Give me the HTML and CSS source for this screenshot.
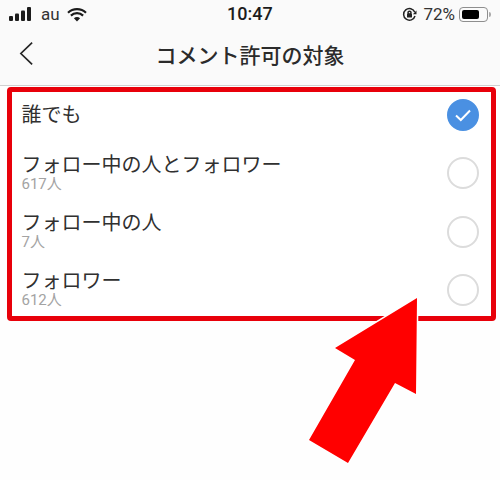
FILE: index.html
```html
<!DOCTYPE html>
<html lang="ja">
<head>
    <meta charset="UTF-8">
    <meta name="viewport" content="width=device-width, initial-scale=1.0">
    <title>コメント許可の対象</title>
    <link rel="stylesheet" href="styles.css">
</head>
<body>
    <div class="screen">
        <div class="status-bar">
            <div class="status-left">
                <svg class="signal" width="23" height="14" viewBox="0 0 23 14">
                    <rect x="0" y="9" width="4" height="5" rx="1"/>
                    <rect x="6" y="6.5" width="4" height="7.5" rx="1"/>
                    <rect x="12" y="3.5" width="4" height="10.5" rx="1"/>
                    <rect x="18" y="0" width="4" height="14" rx="1"/>
                </svg>
                <span class="carrier">au</span>
                <svg class="wifi" width="20" height="15" viewBox="0 0 20 15">
                    <path d="M10 2.2c3.4 0 6.6 1.3 9 3.6" />
                    <path d="M10 2.2c-3.4 0-6.6 1.3-9 3.6" />
                    <path d="M3.9 8.6c3.4-3.2 8.8-3.2 12.2 0" />
                    <path class="wifi-dot" d="M10 14.6 6.9 11.2c1.8-1.5 4.4-1.5 6.2 0z"/>
                </svg>
            </div>
            <div class="clock">10:47</div>
            <div class="status-right">
                <svg class="lock" width="15" height="15" viewBox="0 0 15 15">
                    <path d="M12.8 5.2A5.8 5.8 0 1 0 13 9"/>
                    <path class="lock-fill" d="M14.5 3.6v3.6h-3.6z"/>
                    <rect class="lock-fill" x="5" y="6.6" width="5" height="4" rx=".6"/>
                    <circle cx="7.5" cy="5.8" r="1.5"/>
                </svg>
                <span class="percent">72%</span>
                <div class="battery"><div class="battery-level" style="width: 72%"></div></div>
                <div class="battery-cap"></div>
            </div>
        </div>

        <div class="nav-bar">
            <svg class="back" width="15" height="25" viewBox="0 0 16 26">
                <path d="M14 1.5 2 13l12 11.5"/>
            </svg>
            <h1>コメント許可の対象</h1>
        </div>

        <div class="options">
            <div class="option">
                <div class="option-text"><div class="label">誰でも</div></div>
                <div class="radio checked">
                    <svg width="18" height="14" viewBox="0 0 18 14"><path d="M2 7.5 6.8 12 16 2.5"/></svg>
                </div>
            </div>
            <div class="option">
                <div class="option-text">
                    <div class="label">フォロー中の人とフォロワー</div>
                    <div class="count">617人</div>
                </div>
                <div class="radio"></div>
            </div>
            <div class="option">
                <div class="option-text">
                    <div class="label">フォロー中の人</div>
                    <div class="count">7人</div>
                </div>
                <div class="radio"></div>
            </div>
            <div class="option">
                <div class="option-text">
                    <div class="label">フォロワー</div>
                    <div class="count">612人</div>
                </div>
                <div class="radio"></div>
            </div>
        </div>

        <!-- annotation arrow on top of the list -->
        <svg class="arrow" width="500" height="480" viewBox="0 0 500 480">
            <polygon points="417,298 416,394 395,383 348,463 309,440 355,360 335,348"/>
        </svg>
    </div>
</body>
</html>
```

FILE: styles.css
```css
* {
    box-sizing: border-box;
}

body {
    margin: 0;
    font-family: "Noto Sans CJK JP", "Noto Sans", sans-serif;
    background: #fefefe;
    color: #262626;
}

.screen {
    position: relative;
    width: 500px;
    height: 480px;
    overflow: hidden;
}

.status-bar {
    display: flex;
    align-items: center;
    justify-content: space-between;
    height: 28px;
    padding: 0 9px;
    background: #fafafa;
    font-family: Roboto, "Noto Sans", sans-serif;
    position: relative;
}

.status-left,
.status-right {
    display: flex;
    align-items: center;
}

.signal {
    fill: #1c1c1c;
}

.carrier {
    margin-left: 9px;
    font-size: 17px;
    color: #333;
}

.wifi {
    margin-left: 7px;
    fill: none;
    stroke: #1c1c1c;
    stroke-width: 2.2;
}

.wifi-dot {
    fill: #1c1c1c;
    stroke: none;
}

.clock {
    position: absolute;
    left: 227px;
    top: 3px;
    font-size: 18px;
    font-weight: 500;
    color: #1c1c1c;
}

.lock {
    fill: none;
    stroke: #222;
    stroke-width: 1.5;
}

.lock-fill {
    fill: #222;
    stroke: none;
}

.percent {
    margin-left: 6px;
    font-size: 17px;
    color: #333;
}

.battery {
    width: 29px;
    height: 15px;
    margin-left: 4px;
    padding: 2px;
    border: 1px solid #8e8e8e;
    border-radius: 4px;
}

.battery-level {
    height: 100%;
    background: #000;
    border-radius: 2px;
}

.battery-cap {
    width: 2px;
    height: 5px;
    margin-left: 1px;
    background: #aaa;
    border-radius: 0 2px 2px 0;
}

.nav-bar {
    position: relative;
    height: 58px;
    display: flex;
    align-items: center;
    justify-content: center;
    background: #fafafa;
    border-bottom: 1px solid #d0d0d0;
}

.back {
    position: absolute;
    left: 19px;
    top: 13px;
    fill: none;
    stroke: #262626;
    stroke-width: 1.8;
}

.nav-bar h1 {
    margin: 0 0 5px;
    font-size: 21px;
    font-weight: 500;
    line-height: 1;
    color: #2b2b2b;
}

.options {
    display: flex;
    flex-direction: column;
    gap: 12.3px;
    width: 489px;
    height: 234px;
    margin: 1px 0 0 7px;
    border: 5px solid #e8000a;
    border-radius: 4px;
    background: #fff;
}

.option {
    display: flex;
    align-items: center;
    justify-content: space-between;
    height: 46px;
    padding: 0 12px 0 9.5px;
}

.label {
    font-family: "Liberation Sans", "Noto Sans CJK JP", sans-serif;
    font-size: 20px;
    line-height: 24px;
    color: #303030;
}

.count {
    margin-bottom: 2px;
    font-family: Roboto, "Noto Sans CJK JP", sans-serif;
    font-size: 15px;
    line-height: 15px;
    color: #a3a3a3;
}

.radio {
    width: 32px;
    height: 32px;
    border: 2px solid #dcdcdc;
    border-radius: 50%;
    display: flex;
    align-items: center;
    justify-content: center;
}

.radio.checked {
    background: #4a90e2;
    border-color: #4a90e2;
}

.radio svg {
    fill: none;
    stroke: #fff;
    stroke-width: 2;
}

.arrow {
    position: absolute;
    left: 0;
    top: 0;
    fill: #ff0000;
    stroke: #fff;
    stroke-width: 3;
    paint-order: stroke;
}
```
